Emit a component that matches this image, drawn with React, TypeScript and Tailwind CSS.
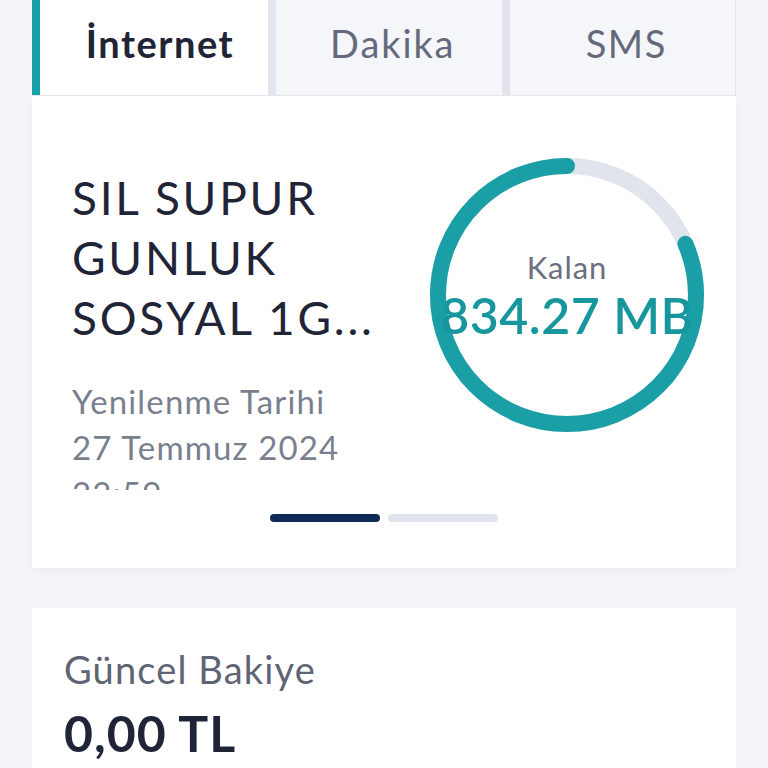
import React from "react";

const R = 129;
const C = 2 * Math.PI * R;

function Ring({ ratio }: { ratio: number }) {
  const len = C * ratio;
  return (
    <div className="relative w-[274px] h-[274px] shrink-0">
      <svg width="274" height="274" viewBox="0 0 274 274" className="-rotate-90">
        <circle cx="137" cy="137" r={R} fill="none" stroke="#e1e3ed" strokeWidth="16" />
        <circle
          cx="137"
          cy="137"
          r={R}
          fill="none"
          stroke="#1a9fa7"
          strokeWidth="16"
          strokeLinecap="round"
          strokeDasharray={`${len} ${C}`}
          strokeDashoffset={-(C - len)}
        />
      </svg>
      <div className="absolute inset-0 flex flex-col items-center justify-center">
        <div className="text-[31px] leading-[34px] tracking-[0.03em] text-[#6b6f80]">Kalan</div>
        <div className="text-[50px] leading-[52px] font-semibold tracking-[0.01em] text-[#17969e] whitespace-nowrap mt-[5px]">
          834.27 MB
        </div>
      </div>
    </div>
  );
}

export default function App() {
  return (
    <div className="min-h-screen bg-[#f4f5f8] px-8 font-['Lato',sans-serif] overflow-hidden">
      {/* sekmeler */}
      <div className="flex h-24 border-b border-[#e4e6ec]">
        <div className="w-[236px] bg-white border-l-8 border-[#17a0a8] flex items-center justify-center pl-[12px] pb-[8px] text-[38px] tracking-[0.04em] font-bold text-[#1f2437]">
          İnternet
        </div>
        <div className="w-[8px] bg-[#e2e4ee]" />
        <div className="flex-1 bg-[#f4f6fa] flex items-center justify-center pl-[8px] pb-[8px] text-[38px] tracking-[0.05em] text-[#646a7c]">
          Dakika
        </div>
        <div className="w-[8px] bg-[#e2e4ee]" />
        <div className="flex-1 bg-[#f4f6fa] border-r border-[#e2e4ee] flex items-center justify-center pl-[8px] pb-[8px] text-[38px] tracking-[0.04em] text-[#646a7c]">
          SMS
        </div>
      </div>

      {/* paket kartı */}
      <div className="bg-white h-[472px] shadow-[0_4px_10px_rgba(0,0,0,0.04)] flex flex-col">
        <div className="flex pl-10 pr-8 pt-[62px]">
          <div className="flex-1 flex flex-col">
            <div className="text-[46px] leading-[60px] tracking-[0.06em] text-[#1f2437] mt-[10px]">
              SIL SUPUR
              <br />
              GUNLUK
              <br />
              SOSYAL 1G...
            </div>
            <div className="mt-[30px] h-[112px] overflow-hidden text-[33px] leading-[46px] tracking-[0.035em] text-[#7a7f8e]">
              Yenilenme Tarihi
              <br />
              27 Temmuz 2024
              <br />
              23:59
            </div>
          </div>
          <Ring ratio={0.815} />
        </div>
        <div className="flex justify-center gap-2 mt-[24px]">
          <div className="w-[110px] h-2 rounded-sm bg-[#0e2a55]" />
          <div className="w-[110px] h-2 rounded-sm bg-[#e1e3ed]" />
        </div>
      </div>

      {/* bakiye kartı */}
      <div className="bg-white mt-10 px-8 pt-[37px] pb-10">
        <div className="text-[38px] leading-[48px] tracking-[0.03em] text-[#5f6475]">Güncel Bakiye</div>
        <div className="text-[50px] leading-[60px] font-bold tracking-[0.02em] text-[#1f2437] mt-[10px]">0,00 TL</div>
      </div>
    </div>
  );
}
